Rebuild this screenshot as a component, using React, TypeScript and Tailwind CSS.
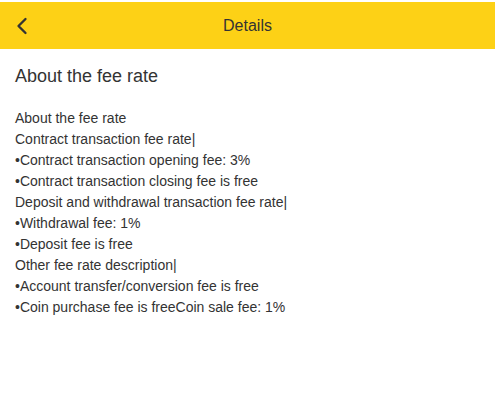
import { ChevronLeft } from 'lucide-react';

const lines = [
    'About the fee rate',
    'Contract transaction fee rate|',
    '•Contract transaction opening fee: 3%',
    '•Contract transaction closing fee is free',
    'Deposit and withdrawal transaction fee rate|',
    '•Withdrawal fee: 1%',
    '•Deposit fee is free',
    'Other fee rate description|',
    '•Account transfer/conversion fee is free',
    '•Coin purchase fee is freeCoin sale fee: 1%',
];

export default function App() {
    return (
        <div className="min-h-[408px] w-[495px] bg-white pt-[2px] font-['Liberation_Sans',Arial,sans-serif] text-[#333]">
            <header className="relative flex h-[47px] items-center justify-center bg-[#fdd116]">
                <button className="absolute left-[8px] top-1/2 -translate-y-1/2 text-[#333]">
                    <ChevronLeft size={28} strokeWidth={2} />
                </button>
                <h1 className="text-[16px] text-[#333]">Details</h1>
            </header>
            <div className="px-[15px] pt-[15px]">
                <h2 className="text-[18px] leading-[24px] text-[#333]">About the fee rate</h2>
                <div className="mt-[20px] text-[14px] leading-[21px]">
                    {lines.map((l, i) => (
                        <p key={i}>{l}</p>
                    ))}
                </div>
            </div>
        </div>
    );
}
